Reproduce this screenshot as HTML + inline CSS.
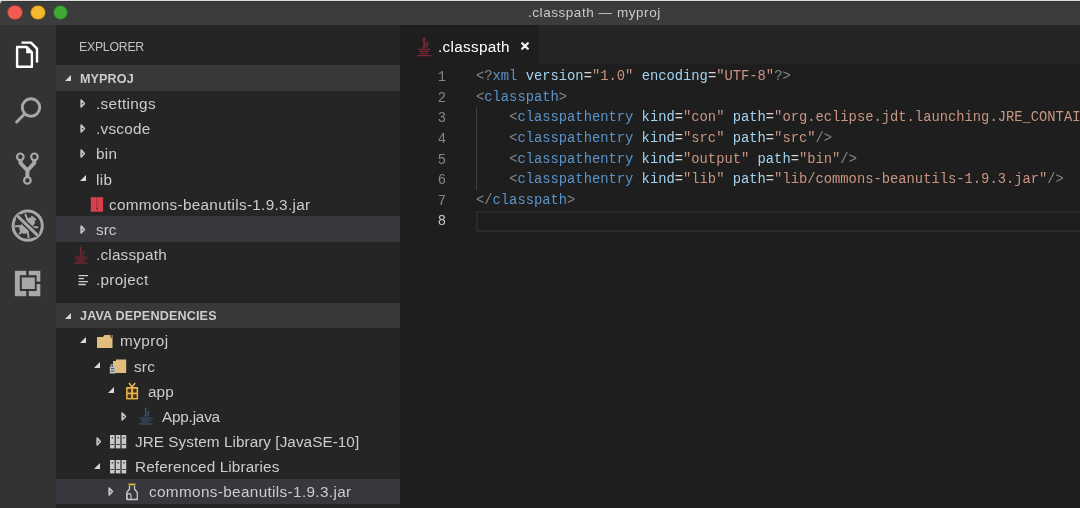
<!DOCTYPE html>
<html><head><meta charset="utf-8">
<style>
*{margin:0;padding:0;box-sizing:border-box}
html,body{width:1080px;height:508px;overflow:hidden;background:#1e1e1e}
body{position:relative;font-family:"Liberation Sans",sans-serif;color:#cccccc}
.b{position:absolute}
.t{position:absolute;line-height:1;white-space:nowrap;will-change:transform}
.i{position:absolute;overflow:visible}
.code{position:absolute;will-change:transform;left:476px;top:67.1px;font-family:"Liberation Mono",monospace;font-size:13.8px;line-height:20.62px;white-space:pre;color:#d4d4d4}
.ln{position:absolute;will-change:transform;left:400px;top:67.5px;width:46px;text-align:right;font-family:"Liberation Mono",monospace;font-size:13.78px;line-height:20.62px;color:#858585;white-space:pre}
.p{color:#858585}.tg{color:#5a94ca}.at{color:#a2d4f0}.st{color:#c99580}
</style></head><body>
<div class="b" style="left:0;top:0;width:8px;height:8px;background:#d0d0d0"></div>
<div class="b" style="left:0;top:0;width:1080px;height:25px;background:#3c3c3c;border-top-left-radius:5px"></div>
<div class="b" style="left:0;top:0;width:1080px;height:1px;background:#dcdcdc"></div>
<div class="b" style="left:5px;top:1px;width:1075px;height:1px;background:#333"></div>
<div class="b" style="left:8.25px;top:5.75px;width:13.5px;height:13.5px;border-radius:50%;background:#f25a53;box-shadow:0 0 0 0.7px #b8403a"></div>
<div class="b" style="left:31.05px;top:5.75px;width:13.5px;height:13.5px;border-radius:50%;background:#f4b92f;box-shadow:0 0 0 0.7px #9a6a10"></div>
<div class="b" style="left:53.95px;top:5.75px;width:13.5px;height:13.5px;border-radius:50%;background:#40aa36;box-shadow:0 0 0 0.7px #2a7a22"></div>
<div class="t" style="left:528.40px;top:6.37px;font-size:13.5px;letter-spacing:0.55px;color:#cacaca;font-weight:normal;">.classpath — myproj</div>
<div class="b" style="left:0;top:25px;width:56px;height:483px;background:#333333"></div>
<div class="b" style="left:56px;top:25px;width:344px;height:483px;background:#252526"></div>
<div class="t" style="left:79.20px;top:40.59px;font-size:12.3px;letter-spacing:-0.25px;color:#c2c2c2;font-weight:normal;">EXPLORER</div>
<div class="b" style="left:56px;top:65.40px;width:344px;height:25.17px;background:#383838"></div>
<svg class="i" style="left:64.00px;top:73.80px" width="9" height="9"><path d="M7 1 L7 7 L1 7 Z" fill="#d8d8d8"/></svg>
<div class="t" style="left:79.60px;top:72.73px;font-size:12.6px;letter-spacing:0.1px;color:#cccccc;font-weight:bold;">MYPROJ</div>
<div class="b" style="left:56px;top:216.42px;width:344px;height:25.17px;background:#37373d"></div>
<div class="t" style="left:95.50px;top:96.12px;font-size:15.3px;letter-spacing:0.33px;color:#cccccc;font-weight:normal;">.settings</div>
<svg class="i" style="left:79.00px;top:97.77px" width="8" height="11"><path d="M2.2 2.1 L5.4 5.5 L2.2 8.9 Z" fill="none" stroke="#c5c5c5" stroke-width="1.7" stroke-linejoin="round"/></svg>
<div class="t" style="left:95.50px;top:121.29px;font-size:15.3px;letter-spacing:0.27px;color:#cccccc;font-weight:normal;">.vscode</div>
<svg class="i" style="left:79.00px;top:122.94px" width="8" height="11"><path d="M2.2 2.1 L5.4 5.5 L2.2 8.9 Z" fill="none" stroke="#c5c5c5" stroke-width="1.7" stroke-linejoin="round"/></svg>
<div class="t" style="left:95.50px;top:146.46px;font-size:15.3px;letter-spacing:0.3px;color:#cccccc;font-weight:normal;">bin</div>
<svg class="i" style="left:79.00px;top:148.11px" width="8" height="11"><path d="M2.2 2.1 L5.4 5.5 L2.2 8.9 Z" fill="none" stroke="#c5c5c5" stroke-width="1.7" stroke-linejoin="round"/></svg>
<div class="t" style="left:95.50px;top:171.63px;font-size:15.3px;letter-spacing:0.4px;color:#cccccc;font-weight:normal;">lib</div>
<svg class="i" style="left:79.00px;top:173.88px" width="9" height="9"><path d="M7 1 L7 7 L1 7 Z" fill="#d8d8d8"/></svg>
<div class="t" style="left:109.30px;top:196.80px;font-size:15.3px;letter-spacing:0.31px;color:#cccccc;font-weight:normal;">commons-beanutils-1.9.3.jar</div>
<div class="t" style="left:95.80px;top:221.97px;font-size:15.3px;letter-spacing:0.0px;color:#cccccc;font-weight:normal;">src</div>
<svg class="i" style="left:79.00px;top:223.62px" width="8" height="11"><path d="M2.2 2.1 L5.4 5.5 L2.2 8.9 Z" fill="none" stroke="#c5c5c5" stroke-width="1.7" stroke-linejoin="round"/></svg>
<div class="t" style="left:95.50px;top:247.14px;font-size:15.3px;letter-spacing:0.2px;color:#cccccc;font-weight:normal;">.classpath</div>
<div class="t" style="left:95.50px;top:272.31px;font-size:15.3px;letter-spacing:0.3px;color:#cccccc;font-weight:normal;">.project</div>
<div class="b" style="left:56px;top:302.70px;width:344px;height:25.17px;background:#383838"></div>
<div class="b" style="left:56px;top:301.5px;width:344px;height:1px;background:#202020"></div>
<svg class="i" style="left:64.00px;top:311.60px" width="9" height="9"><path d="M7 1 L7 7 L1 7 Z" fill="#d8d8d8"/></svg>
<div class="t" style="left:79.70px;top:309.93px;font-size:12.6px;letter-spacing:0.15px;color:#cccccc;font-weight:bold;">JAVA DEPENDENCIES</div>
<div class="b" style="left:56px;top:478.89px;width:344px;height:25.17px;background:#37373d"></div>
<div class="t" style="left:120.00px;top:333.42px;font-size:15.3px;letter-spacing:0.45px;color:#cccccc;font-weight:normal;">myproj</div>
<svg class="i" style="left:79.30px;top:335.67px" width="9" height="9"><path d="M7 1 L7 7 L1 7 Z" fill="#d8d8d8"/></svg>
<div class="t" style="left:134.30px;top:358.59px;font-size:15.3px;letter-spacing:0.2px;color:#cccccc;font-weight:normal;">src</div>
<svg class="i" style="left:93.00px;top:360.84px" width="9" height="9"><path d="M7 1 L7 7 L1 7 Z" fill="#d8d8d8"/></svg>
<div class="t" style="left:148.20px;top:383.76px;font-size:15.3px;letter-spacing:0.1px;color:#cccccc;font-weight:normal;">app</div>
<svg class="i" style="left:106.60px;top:386.01px" width="9" height="9"><path d="M7 1 L7 7 L1 7 Z" fill="#d8d8d8"/></svg>
<div class="t" style="left:162.00px;top:408.93px;font-size:15.3px;letter-spacing:-0.2px;color:#cccccc;font-weight:normal;">App.java</div>
<svg class="i" style="left:120.40px;top:410.58px" width="8" height="11"><path d="M2.2 2.1 L5.4 5.5 L2.2 8.9 Z" fill="none" stroke="#c5c5c5" stroke-width="1.7" stroke-linejoin="round"/></svg>
<div class="t" style="left:134.60px;top:434.10px;font-size:15.3px;letter-spacing:0.05px;color:#cccccc;font-weight:normal;">JRE System Library [JavaSE-10]</div>
<svg class="i" style="left:94.50px;top:435.75px" width="8" height="11"><path d="M2.2 2.1 L5.4 5.5 L2.2 8.9 Z" fill="none" stroke="#c5c5c5" stroke-width="1.7" stroke-linejoin="round"/></svg>
<div class="t" style="left:134.50px;top:459.27px;font-size:15.3px;letter-spacing:0.12px;color:#cccccc;font-weight:normal;">Referenced Libraries</div>
<svg class="i" style="left:93.00px;top:461.52px" width="9" height="9"><path d="M7 1 L7 7 L1 7 Z" fill="#d8d8d8"/></svg>
<div class="t" style="left:148.50px;top:484.44px;font-size:15.3px;letter-spacing:0.35px;color:#cccccc;font-weight:normal;">commons-beanutils-1.9.3.jar</div>
<svg class="i" style="left:107.00px;top:486.09px" width="8" height="11"><path d="M2.2 2.1 L5.4 5.5 L2.2 8.9 Z" fill="none" stroke="#c5c5c5" stroke-width="1.7" stroke-linejoin="round"/></svg>
<div class="b" style="left:400px;top:25px;width:680px;height:39px;background:#252526"></div>
<div class="b" style="left:400px;top:25px;width:139px;height:39px;background:#1e1e1e"></div>
<div class="t" style="left:438.00px;top:38.95px;font-size:15.3px;letter-spacing:0.3px;color:#ffffff;font-weight:normal;">.classpath</div>
<svg class="i" style="left:519.2px;top:40px" width="12" height="12"><path d="M3.2 3.2 L8.8 8.8 M8.8 3.2 L3.2 8.8" stroke="#f0f0f0" stroke-width="2.3" stroke-linecap="round"/></svg>
<div class="b" style="left:476px;top:210.5px;width:620px;height:21px;border:2px solid #2a2a2a"></div>
<div class="b" style="left:476px;top:107px;width:1px;height:83px;background:#404040"></div>
<div class="ln">1
2
3
4
5
6
7
<span style="color:#c6c6c6">8</span></div>
<div class="code"><span class="p">&lt;?</span><span class="tg">xml</span> <span class="at">version</span>=<span class="st">"1.0"</span> <span class="at">encoding</span>=<span class="st">"UTF-8"</span><span class="p">?&gt;</span>
<span class="p">&lt;</span><span class="tg">classpath</span><span class="p">&gt;</span>
    <span class="p">&lt;</span><span class="tg">classpathentry</span> <span class="at">kind</span>=<span class="st">"con"</span> <span class="at">path</span>=<span class="st">"org.eclipse.jdt.launching.JRE_CONTAINER"</span><span class="p">/&gt;</span>
    <span class="p">&lt;</span><span class="tg">classpathentry</span> <span class="at">kind</span>=<span class="st">"src"</span> <span class="at">path</span>=<span class="st">"src"</span><span class="p">/&gt;</span>
    <span class="p">&lt;</span><span class="tg">classpathentry</span> <span class="at">kind</span>=<span class="st">"output"</span> <span class="at">path</span>=<span class="st">"bin"</span><span class="p">/&gt;</span>
    <span class="p">&lt;</span><span class="tg">classpathentry</span> <span class="at">kind</span>=<span class="st">"lib"</span> <span class="at">path</span>=<span class="st">"lib/commons-beanutils-1.9.3.jar"</span><span class="p">/&gt;</span>
<span class="p">&lt;/</span><span class="tg">classpath</span><span class="p">&gt;</span>
</div>
<!-- activity bar icons -->
<svg class="i" style="left:0;top:25px" width="56" height="290">
 <!-- files (coords relative to y=25) -->
 <g transform="translate(0,-25)">
  <path d="M21.5 42.6 H31 L37 48.6 V62.5" fill="none" stroke="#ffffff" stroke-width="2.4" stroke-linejoin="round"/>
  <path d="M17.1 47 H26.8 L31.9 52.4 V66.7 H17.1 Z" fill="#333333" stroke="#ffffff" stroke-width="2.4" stroke-linejoin="round"/>
  <path d="M26.2 46 V53.2 H33.1 Z" fill="#ffffff"/>
 </g>
 <g transform="translate(0,-25)" fill="none" stroke="#a8a8a8" stroke-linecap="round">
  <circle cx="31" cy="107.5" r="8.7" stroke-width="2.9"/>
  <path d="M24.6 114 L16.6 122" stroke-width="3"/>
 </g>
 <g transform="translate(0,-25)" fill="none" stroke="#a8a8a8">
  <circle cx="20.3" cy="156.8" r="3.3" stroke-width="2.2"/>
  <circle cx="34.4" cy="156.8" r="3.3" stroke-width="2.2"/>
  <circle cx="27.4" cy="180.4" r="3.3" stroke-width="2.2"/>
  <path d="M20.5 160 V163 L27.4 170.5 L34.3 163 V160 M27.4 170.5 V177" stroke-width="4" stroke-linejoin="round"/>
 </g>
 <g transform="translate(0,-25)">
  <circle cx="27.7" cy="225.7" r="14.6" fill="none" stroke="#a8a8a8" stroke-width="3"/>
  <circle cx="24.6" cy="228.4" r="5.3" fill="#a8a8a8"/>
  <circle cx="30.6" cy="222" r="4.4" fill="#a8a8a8"/>
  <path d="M15.8 226.2 H21 M25.4 214.6 L27.4 219.6 M31.8 216.8 L35.4 219.4 M32.4 227.2 H37.4 M27.8 232.4 L28.6 237.4 M19.6 233.6 L22 231.6" stroke="#a8a8a8" stroke-width="1.9" stroke-linecap="round"/>
  <path d="M17.4 215.8 L37.6 235.4" stroke="#333333" stroke-width="6"/>
  <path d="M17.4 215.8 L37.6 235.4" stroke="#a8a8a8" stroke-width="3"/>
 </g>
 <g transform="translate(0,-25)">
  <rect x="14.9" y="270.8" width="25.4" height="25.4" fill="#a8a8a8"/>
  <rect x="19.8" y="275.2" width="16.8" height="15.8" fill="#333333"/>
  <rect x="21.8" y="277.5" width="13" height="11.5" fill="#a8a8a8"/>
  <rect x="26.2" y="270" width="2.5" height="6" fill="#333333"/>
  <rect x="26.2" y="290" width="2.5" height="7" fill="#333333"/>
  <rect x="36" y="281.6" width="5" height="2.5" fill="#333333"/>
 </g>
</svg>
<!-- sidebar file icons -->
<svg class="i" style="left:0;top:0" width="400" height="508">
 <!-- red jar -->
 <rect x="90.8" y="197.2" width="12.3" height="14.5" fill="#d8404e"/>
 <path d="M96.9 198 V208" stroke="#a02a36" stroke-width="1"/>
 <rect x="96.2" y="208" width="1.5" height="1.5" fill="#701820"/>
 <!-- java icon .classpath -->
 <g transform="translate(73.5,246.5)" fill="none" stroke="#7a2434">
  <path d="M7.8 0.3 C4.6 3.4 10.2 5.2 6.6 9.2" stroke-width="1.6"/>
  <path d="M10.6 3.8 C8.8 5.8 11.2 6.8 9.4 8.8" stroke-width="1.2"/>
  <path d="M1.5 10.6 H12.5 M2.6 12.6 H11.4 M3.4 14.6 H10.6 M0.3 16.6 H14.3" stroke-width="1.1"/>
  <path d="M12.6 10.8 C14.6 11 14.4 13.2 12 13.4" stroke-width="1"/>
 </g>
<!-- .project lines -->
 <g stroke="#cfcfcf" stroke-width="1.4">
  <path d="M78.6 275.6 H88.1 M78.6 278.6 H84 M78.6 281.6 H88.1 M78.6 284.5 H85.9"/>
 </g>
 <!-- myproj folder -->
 <path d="M97 337 H103 L104.5 335 H112.5 V348 H97 Z" fill="#e3bd7d"/>
 <path d="M107 334.5 C110 333 112 335 111 338" fill="none" stroke="#3a3020" stroke-width="1.2"/>
 <!-- src package folder -->
 <path d="M113 361 H116 V359.5 H126.2 V373 H113 Z" fill="#e3bd7d"/>
 <rect x="109.8" y="366.5" width="5.5" height="7" fill="#b8c0c8"/>
 <path d="M111 366.5 V364.8 H114 V366.5" fill="none" stroke="#b8c0c8" stroke-width="1"/>
 <rect x="110.8" y="368" width="3.5" height="1" fill="#556"/>
 <rect x="110.8" y="370.5" width="3.5" height="1" fill="#556"/>
 <!-- app package gift -->
 <rect x="126.1" y="387" width="12" height="12.4" fill="#e8b64a"/>
 <rect x="127.6" y="388.8" width="3.6" height="3.8" fill="#4a3620"/>
 <rect x="133" y="388.8" width="3.6" height="3.8" fill="#4a3620"/>
 <rect x="127.6" y="394.2" width="3.6" height="3.8" fill="#4a3620"/>
 <rect x="133" y="394.2" width="3.6" height="3.8" fill="#4a3620"/>
 <path d="M129 383 L132.1 387 L135.2 383" fill="none" stroke="#e8b64a" stroke-width="1.6"/>
 <!-- App.java blue java -->
 <g transform="translate(138.4,407.4)" fill="none" stroke="#3d5773">
  <path d="M7.8 0.3 C4.6 3.4 10.2 5.2 6.6 9.2" stroke-width="1.6"/>
  <path d="M10.6 3.8 C8.8 5.8 11.2 6.8 9.4 8.8" stroke-width="1.2"/>
  <path d="M1.5 10.6 H12.5 M2.6 12.6 H11.4 M3.4 14.6 H10.6 M0.3 16.6 H14.3" stroke-width="1.1"/>
  <path d="M12.6 10.8 C14.6 11 14.4 13.2 12 13.4" stroke-width="1"/>
 </g>
<!-- library icons -->
 <g fill="#c8c8c8">
  <rect x="110" y="435" width="4.6" height="13.4"/><rect x="115.8" y="435" width="4.6" height="13.4"/><rect x="121.6" y="435" width="4.6" height="13.4"/>
  <rect x="110" y="460" width="4.6" height="13.4"/><rect x="115.8" y="460" width="4.6" height="13.4"/><rect x="121.6" y="460" width="4.6" height="13.4"/>
 </g>
 <g fill="#444">
  <rect x="111.6" y="437" width="1.5" height="1.5"/><rect x="117.4" y="437" width="1.5" height="1.5"/><rect x="123.2" y="437" width="1.5" height="1.5"/>
  <rect x="110.5" y="444" width="3.6" height="1"/><rect x="116.3" y="444" width="3.6" height="1"/><rect x="122.1" y="444" width="3.6" height="1"/>
  <rect x="111.6" y="462" width="1.5" height="1.5"/><rect x="117.4" y="462" width="1.5" height="1.5"/><rect x="123.2" y="462" width="1.5" height="1.5"/>
  <rect x="110.5" y="469" width="3.6" height="1"/><rect x="116.3" y="469" width="3.6" height="1"/><rect x="122.1" y="469" width="3.6" height="1"/>
 </g>
 <!-- jar bottle -->
 <path d="M128.5 484.5 H135.5" stroke="#d8b040" stroke-width="2"/>
 <path d="M129.5 486 V489 L126.8 492.5 V499.5 H137.3 V492.5 L134.5 489 V486" fill="none" stroke="#c8c8c8" stroke-width="1.3" stroke-linejoin="round"/>
 <path d="M127 499 V495.5 C127 493 131 493 131 495.5 V499" fill="none" stroke="#c8c8c8" stroke-width="1.2"/>
</svg>
<!-- tab java icon -->
<svg class="i" style="left:0;top:0" width="440" height="60">
 <g transform="translate(416.5,37.5)" fill="none" stroke="#7a2434">
  <path d="M8.4 0.3 C4.2 4 11.4 6 6.8 10.6" stroke-width="2.4"/>
  <path d="M11.6 4.4 C9.4 6.6 12.4 7.6 10 10" stroke-width="1.6"/>
  <path d="M1.6 12 H13.6 M2.8 14.2 H12.4 M3.7 16.3 H11.5 M0.6 18.2 H15.2" stroke-width="1.3"/>
 </g>
</svg>
</body></html>
